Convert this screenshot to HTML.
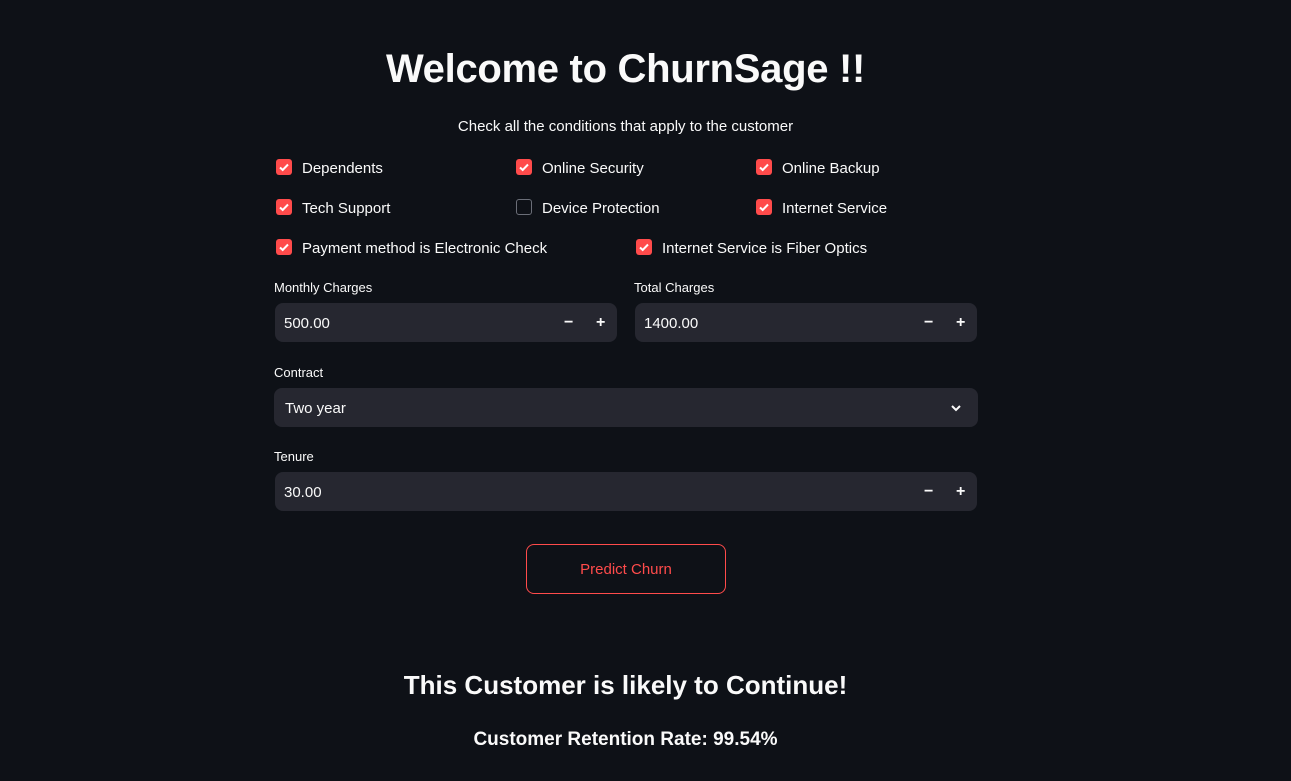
<!DOCTYPE html>
<html><head><style>
body{margin:0;width:1291px;height:781px;background:#0e1117;color:#fafafa;font-family:"Liberation Sans",sans-serif;position:relative;overflow:hidden}
.a{position:absolute;white-space:nowrap}
.c{left:0;width:1251px;text-align:center}
.cb{position:absolute;width:16px;height:16px;border-radius:3px;background:#ff4b4b}
.cb svg{position:absolute;left:2px;top:2px}
.cb.off{background:transparent;border:1px solid #6b6e78;width:14px;height:14px}
.lab{position:absolute;font-size:15px;color:#fafafa;white-space:nowrap}
.sm{position:absolute;font-size:13px;color:#fafafa}
.inp{position:absolute;background:#262730;border-radius:8px;height:39px}
.inp span.v{position:absolute;left:9px;top:12px;font-size:15px}
.pm{position:absolute;top:11px;font-size:16px;font-weight:bold}
</style></head><body>
<div class="a c" style="top:47px;font-size:40px;font-weight:bold;letter-spacing:-0.3px">Welcome to ChurnSage !!</div>
<div class="a c" style="top:118px;font-size:15px">Check all the conditions that apply to the customer</div>

<div class="cb" style="left:276px;top:159px"><svg width="12" height="12" viewBox="0 0 12 12"><path d="M2 6.5l2.7 2.5L10 3.5" stroke="#fff" stroke-width="2" fill="none"/></svg></div><div class="lab" style="left:302px;top:160px">Dependents</div>
<div class="cb" style="left:516px;top:159px"><svg width="12" height="12" viewBox="0 0 12 12"><path d="M2 6.5l2.7 2.5L10 3.5" stroke="#fff" stroke-width="2" fill="none"/></svg></div><div class="lab" style="left:542px;top:160px">Online Security</div>
<div class="cb" style="left:756px;top:159px"><svg width="12" height="12" viewBox="0 0 12 12"><path d="M2 6.5l2.7 2.5L10 3.5" stroke="#fff" stroke-width="2" fill="none"/></svg></div><div class="lab" style="left:782px;top:160px">Online Backup</div>

<div class="cb" style="left:276px;top:199px"><svg width="12" height="12" viewBox="0 0 12 12"><path d="M2 6.5l2.7 2.5L10 3.5" stroke="#fff" stroke-width="2" fill="none"/></svg></div><div class="lab" style="left:302px;top:200px">Tech Support</div>
<div class="cb off" style="left:516px;top:199px"></div><div class="lab" style="left:542px;top:200px">Device Protection</div>
<div class="cb" style="left:756px;top:199px"><svg width="12" height="12" viewBox="0 0 12 12"><path d="M2 6.5l2.7 2.5L10 3.5" stroke="#fff" stroke-width="2" fill="none"/></svg></div><div class="lab" style="left:782px;top:200px">Internet Service</div>

<div class="cb" style="left:276px;top:239px"><svg width="12" height="12" viewBox="0 0 12 12"><path d="M2 6.5l2.7 2.5L10 3.5" stroke="#fff" stroke-width="2" fill="none"/></svg></div><div class="lab" style="left:302px;top:240px">Payment method is Electronic Check</div>
<div class="cb" style="left:636px;top:239px"><svg width="12" height="12" viewBox="0 0 12 12"><path d="M2 6.5l2.7 2.5L10 3.5" stroke="#fff" stroke-width="2" fill="none"/></svg></div><div class="lab" style="left:662px;top:240px">Internet Service is Fiber Optics</div>

<div class="sm" style="left:274px;top:280px">Monthly Charges</div>
<div class="inp" style="left:275px;top:303px;width:342px"><span class="v">500.00</span><span class="pm" style="left:289px">−</span><span class="pm" style="left:321px">+</span></div>
<div class="sm" style="left:634px;top:280px">Total Charges</div>
<div class="inp" style="left:635px;top:303px;width:342px"><span class="v">1400.00</span><span class="pm" style="left:289px">−</span><span class="pm" style="left:321px">+</span></div>

<div class="sm" style="left:274px;top:365px">Contract</div>
<div class="inp" style="left:274px;top:388px;width:704px"><span class="v" style="left:11px">Two year</span>
<svg style="position:absolute;left:676px;top:14px" width="12" height="12" viewBox="0 0 12 12"><path d="M2 4l4 4 4-4" stroke="#fafafa" stroke-width="2" fill="none"/></svg></div>

<div class="sm" style="left:274px;top:449px">Tenure</div>
<div class="inp" style="left:275px;top:472px;width:702px"><span class="v">30.00</span><span class="pm" style="left:649px">−</span><span class="pm" style="left:681px">+</span></div>

<div class="a" style="left:526px;top:544px;width:198px;height:48px;border:1px solid #ff4b4b;border-radius:8px;text-align:center;line-height:50px;color:#ff4b4b;font-size:15px">Predict Churn</div>

<div class="a c" style="top:670px;font-size:26px;font-weight:bold">This Customer is likely to Continue!</div>
<div class="a c" style="top:729px;font-size:19px;font-weight:bold">Customer Retention Rate: 99.54%</div>
</body></html>
